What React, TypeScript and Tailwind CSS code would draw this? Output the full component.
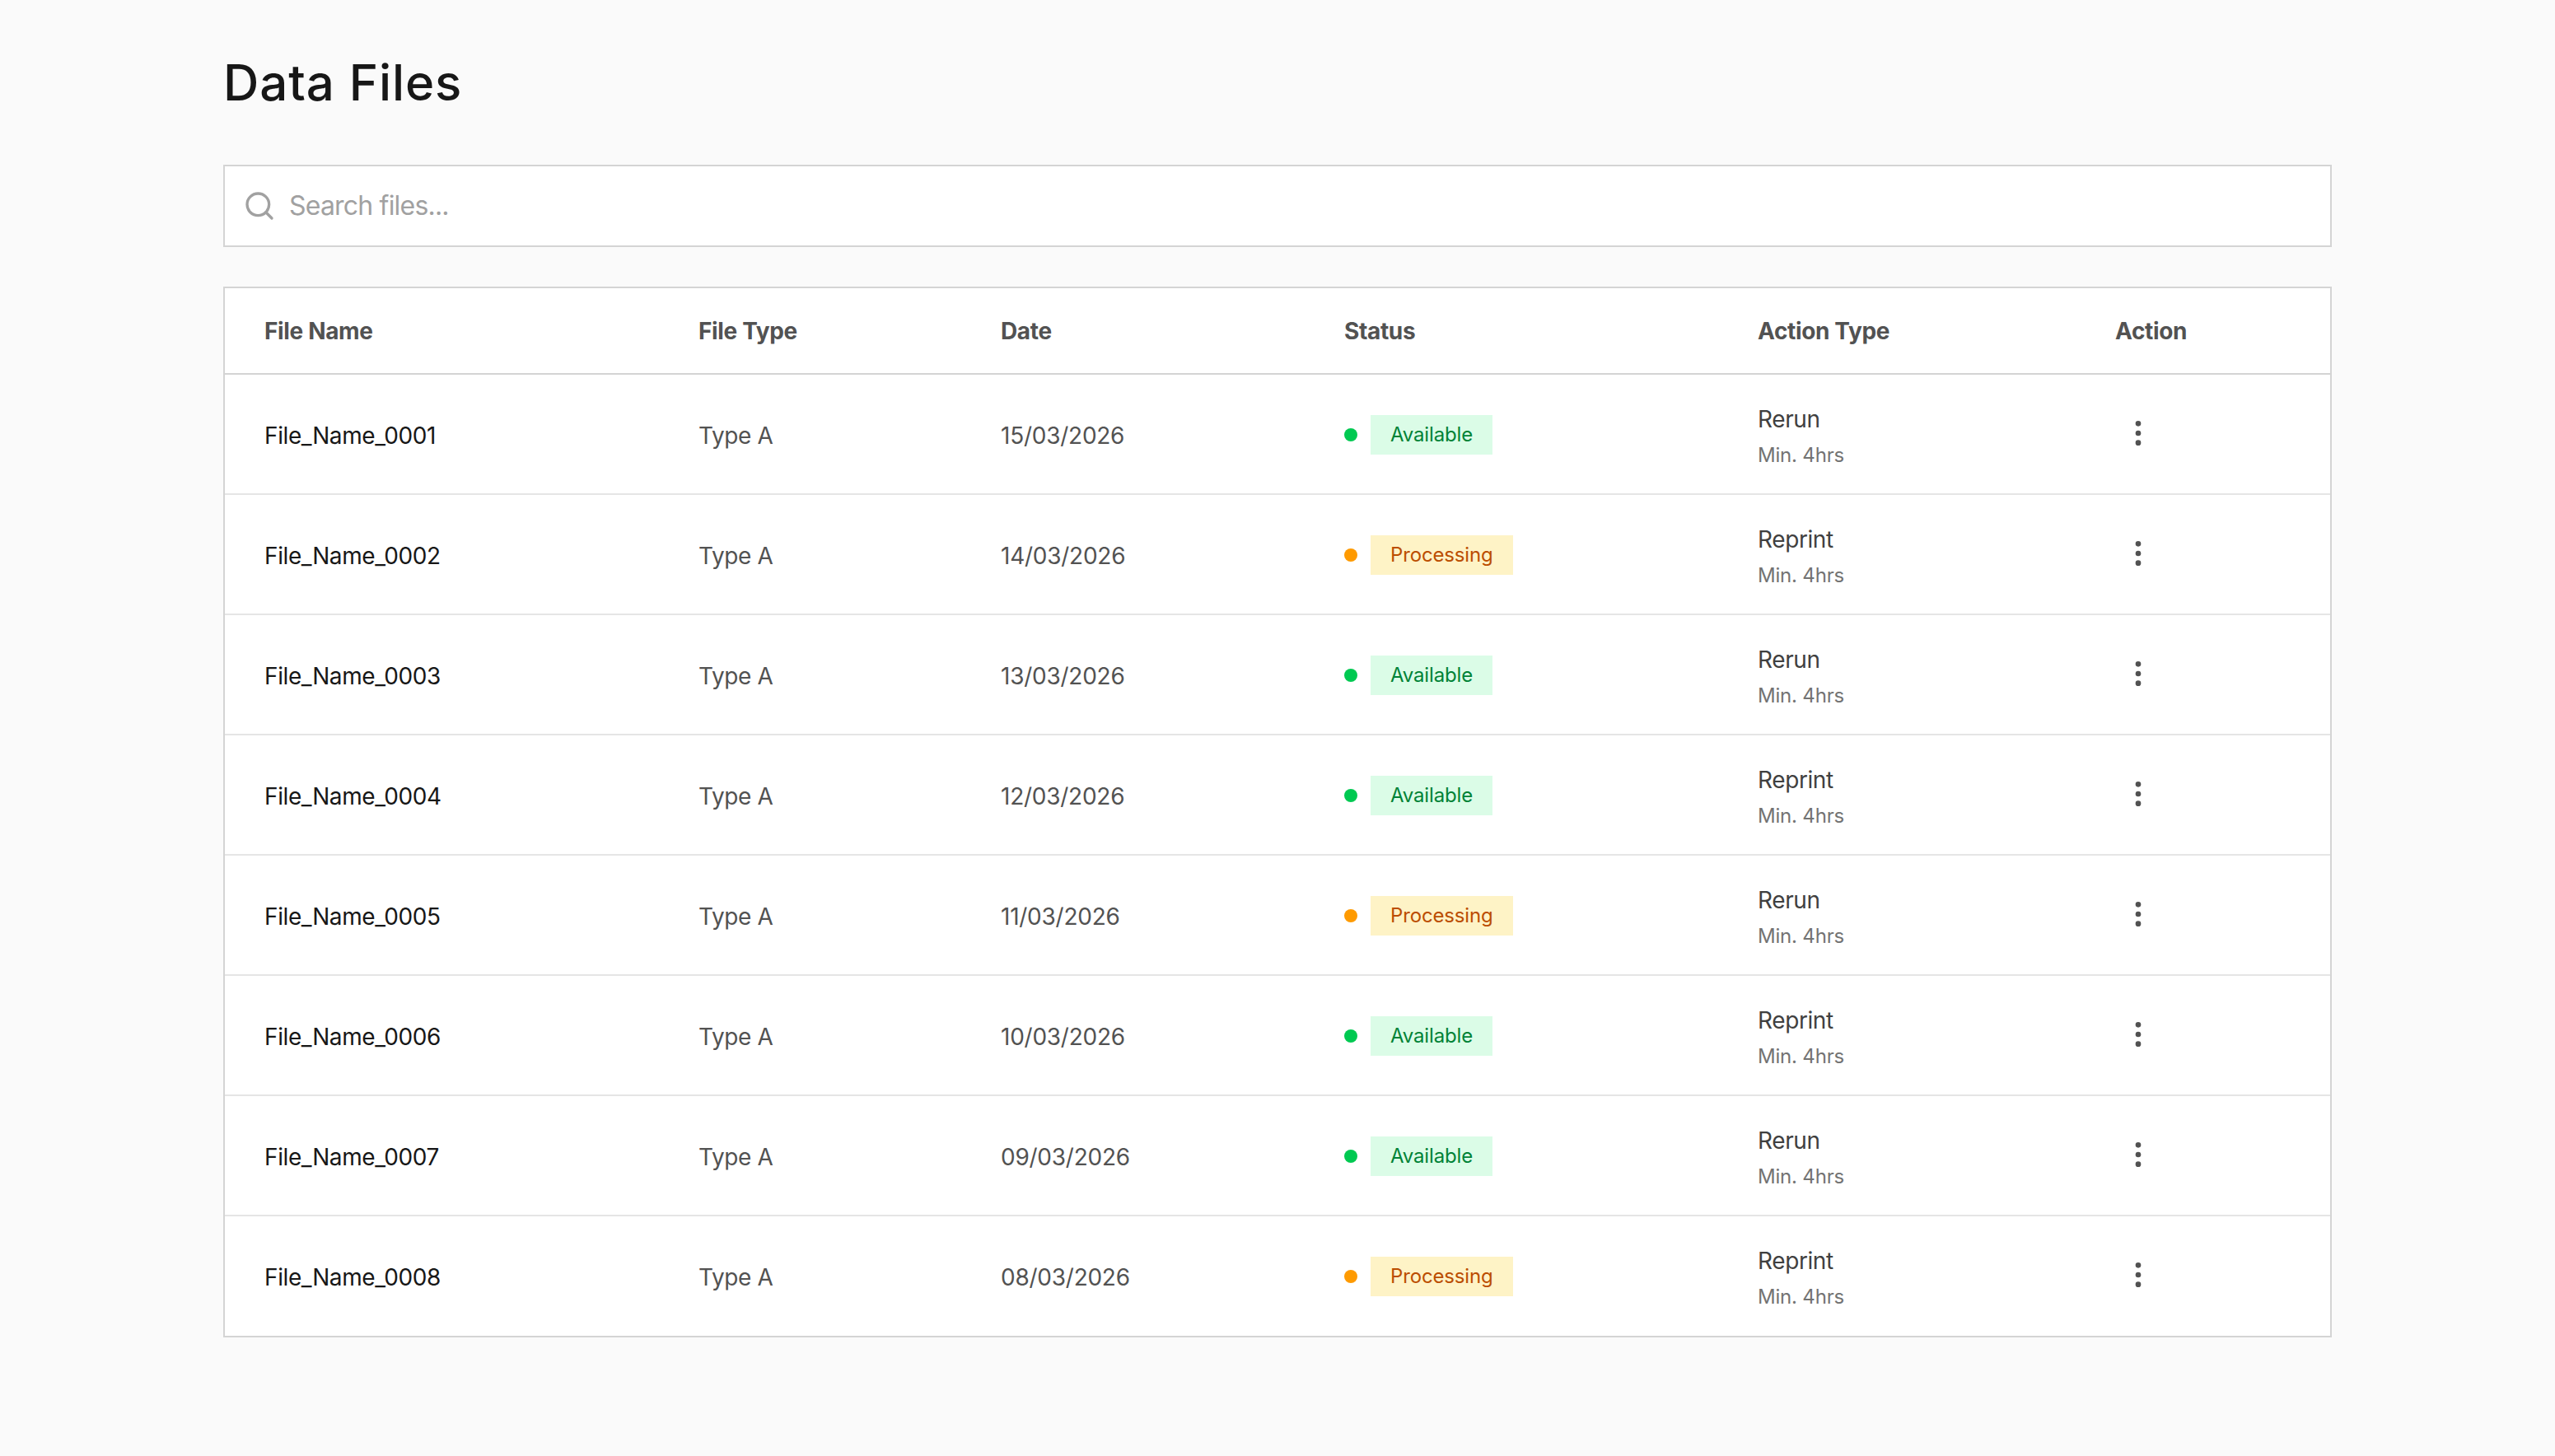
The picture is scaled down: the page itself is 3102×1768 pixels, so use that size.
import { EllipsisVertical, Search } from "lucide-react";

type Status = "Available" | "Processing";

interface FileRow {
  name: string;
  date: string;
  status: Status;
  action: string;
}

const files: FileRow[] = [
  { name: "File_Name_0001", date: "15/03/2026", status: "Available", action: "Rerun" },
  { name: "File_Name_0002", date: "14/03/2026", status: "Processing", action: "Reprint" },
  { name: "File_Name_0003", date: "13/03/2026", status: "Available", action: "Rerun" },
  { name: "File_Name_0004", date: "12/03/2026", status: "Available", action: "Reprint" },
  { name: "File_Name_0005", date: "11/03/2026", status: "Processing", action: "Rerun" },
  { name: "File_Name_0006", date: "10/03/2026", status: "Available", action: "Reprint" },
  { name: "File_Name_0007", date: "09/03/2026", status: "Available", action: "Rerun" },
  { name: "File_Name_0008", date: "08/03/2026", status: "Processing", action: "Reprint" },
];

const columns = ["File Name", "File Type", "Date", "Status", "Action Type", "Action"];
const gridCols = "grid grid-cols-[527px_367px_417px_502px_434px_1fr] items-center";

function StatusBadge({ status }: { status: Status }) {
  const available = status === "Available";
  return (
    <div className="flex items-center gap-4">
      <span className={`h-4 w-4 rounded-full ${available ? "bg-green-500" : "bg-amber-500"}`} />
      <span
        className={`flex h-12 items-center px-6 text-[24px] tracking-[-0.15px] ${
          available ? "bg-green-100 text-green-700" : "bg-amber-100 text-amber-700"
        }`}
      >
        {status}
      </span>
    </div>
  );
}

export default function App() {
  return (
    <div className="min-h-[1768px] bg-neutral-50 font-['Inter',sans-serif]">
      <div className="mx-auto w-[2560px] pt-16">
        <h1 className="text-[60px] leading-[72px] font-medium tracking-[0.9px] text-neutral-900">Data Files</h1>

        {/* Search */}
        <div className="mt-[64px] flex h-[100px] items-center gap-4 border-2 border-neutral-300 bg-white px-[22px]">
          <Search className="h-10 w-10 shrink-0 text-neutral-400" />
          <input
            placeholder="Search files..."
            className="w-full bg-transparent text-[32px] tracking-[-0.8px] text-neutral-900 outline-none placeholder:text-neutral-400"
          />
        </div>

        {/* Table */}
        <div className="mt-12 border-2 border-neutral-300 bg-white">
          <div className={`${gridCols} h-[105px] border-b-2 border-neutral-300`}>
            {columns.map((col) => (
              <div key={col} className="pl-12 text-[28px] font-bold tracking-[-0.35px] text-neutral-600">
                {col}
              </div>
            ))}
          </div>
          {files.map((file) => (
            <div
              key={file.name}
              className={`${gridCols} h-[146px] border-b-2 border-neutral-200 text-[28px] tracking-[-0.4px] last:h-[145px] last:border-b-0 last:pb-px`}
            >
              <div className="pt-1 pl-12 text-neutral-900">{file.name}</div>
              <div className="pt-1 pl-12 text-neutral-600">Type A</div>
              <div className="pt-1 pl-12 tracking-[-0.25px] text-neutral-600">{file.date}</div>
              <div className="pt-0.5 pl-12">
                <StatusBadge status={file.status} />
              </div>
              <div className="pt-[6px] pl-12">
                <div className="leading-[40px] text-neutral-700">{file.action}</div>
                <div className="mt-[6px] text-[24px] leading-[36px] tracking-[-0.2px] text-neutral-500">Min. 4hrs</div>
              </div>
              <div className="pl-12">
                <button className="-mt-0.5 block p-2 text-neutral-600">
                  <EllipsisVertical className="h-10 w-10" />
                </button>
              </div>
            </div>
          ))}
        </div>
      </div>
    </div>
  );
}
